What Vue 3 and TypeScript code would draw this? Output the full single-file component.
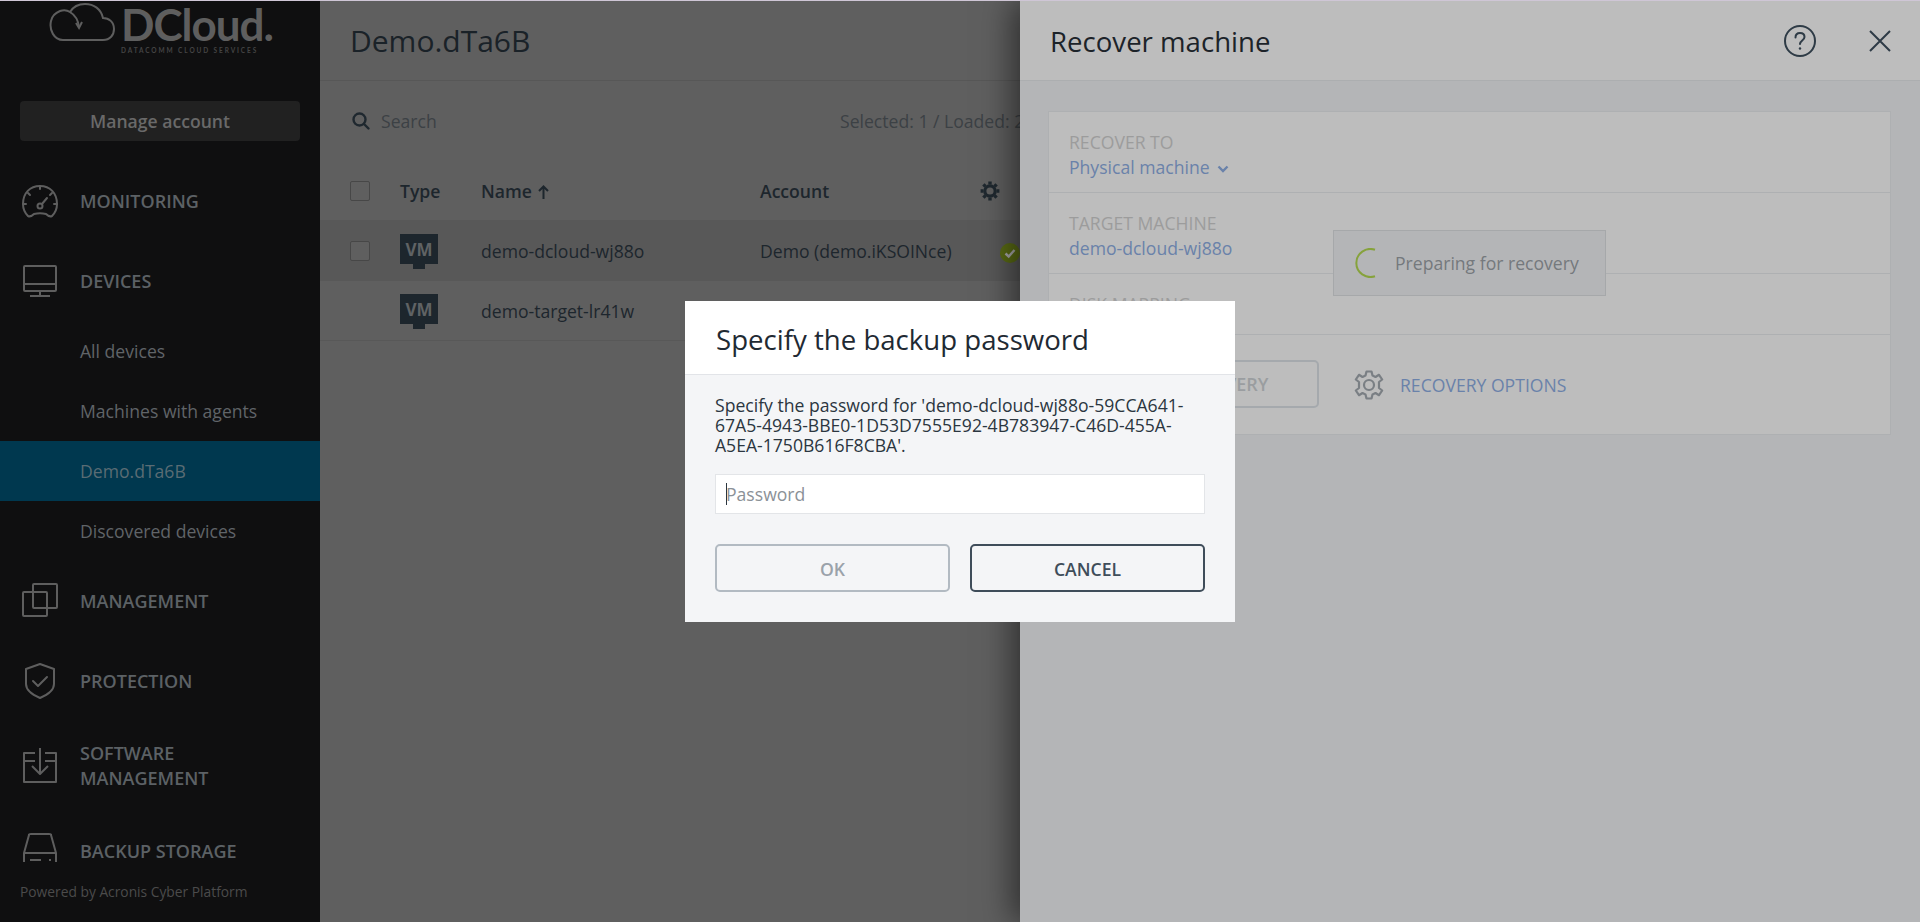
<template>
  <div class="app">
    <aside class="sidebar">
      <div class="logo">
        <svg class="logo-cloud" width="66" height="40" viewBox="0 0 66 40" fill="none" stroke="#5e5e5e" stroke-width="2">
          <path d="M14 38 H54 C61 38 65 33 65 27 C65 20 60 16 54 16 C52 7 45 2 36 2 C29 2 24 5 21 10 C18 8 14 8 11 9 C6 11 3 14 2 19 C0 28 5 38 14 38 Z" />
          <path d="M21 10 C26 13 29 17 30 25" />
          <path d="M27 21 L30 26 L33 20" />
        </svg>
        <div class="logo-text">
          <span class="logo-name">DCloud.</span>
          <span class="logo-tag">DATACOMM CLOUD SERVICES</span>
        </div>
      </div>
      <button class="manage">Manage account</button>

      <nav class="nav">
        <div class="nav-item">
          <svg class="nav-icon" width="40" height="40" viewBox="0 0 40 40" fill="none" stroke="#5e5e5e" stroke-width="2" stroke-linecap="round" stroke-linejoin="round">
            <path d="M8 35 C4 31 3 27 3 23 C3 12 10 5 20 5 C30 5 37 12 37 23 C37 27 36 31 32 35 C30 36 28 35 26 33 C22 32 18 32 14 33 C12 35 10 36 8 35 Z" />
            <circle cx="20" cy="25" r="2.5" />
            <path d="M22 23 L27 17 M20 5 V8 M8 12 L10 14 M32 12 L30 14 M3 23 H6 M37 23 H34" />
          </svg>
          <span>MONITORING</span>
        </div>
        <div class="nav-item">
          <svg class="nav-icon" width="40" height="40" viewBox="0 0 40 40" fill="none" stroke="#5e5e5e" stroke-width="2" stroke-linejoin="round">
            <rect x="4" y="5" width="32" height="25" rx="1" />
            <path d="M4 23 H36 M20 30 V35 M10 35 H30" />
          </svg>
          <span>DEVICES</span>
        </div>
        <div v-for="sub in subItems" :key="sub" class="sub-item" :class="{ active: sub === 'Demo.dTa6B' }">{{ sub }}</div>
        <div class="nav-item">
          <svg class="nav-icon" width="40" height="40" viewBox="0 0 40 40" fill="none" stroke="#5e5e5e" stroke-width="2" stroke-linejoin="round">
            <rect x="3" y="11" width="24" height="24" rx="1" />
            <rect x="13" y="3" width="24" height="24" rx="1" />
          </svg>
          <span>MANAGEMENT</span>
        </div>
        <div class="nav-item">
          <svg class="nav-icon" width="40" height="40" viewBox="0 0 40 40" fill="none" stroke="#5e5e5e" stroke-width="2" stroke-linejoin="round" stroke-linecap="round">
            <path d="M20 3 L34 8 V23 C34 29 27 34 20 37 C13 34 6 29 6 23 V8 Z" />
            <path d="M13 20 L18 25 L27 16" />
          </svg>
          <span>PROTECTION</span>
        </div>
        <div class="nav-item tall">
          <svg class="nav-icon" width="40" height="40" viewBox="0 0 40 40" fill="none" stroke="#5e5e5e" stroke-width="2" stroke-linejoin="round">
            <path d="M15 7 H4 V36 H36 V7 H25 M4 15 H15 M25 15 H36 M20 2 V27 M12 20 L20 28 L28 20" />
          </svg>
          <span>SOFTWARE<br />MANAGEMENT</span>
        </div>
        <div class="nav-item">
          <svg class="nav-icon" width="40" height="40" viewBox="0 0 40 40" fill="none" stroke="#5e5e5e" stroke-width="2" stroke-linejoin="round">
            <path d="M4 22 L9 4 C9 3 10 3 11 3 H29 C30 3 31 3 31 4 L36 22 V38 H4 Z M4 22 H36 M10 29 H21 M29 29 H31" />
          </svg>
          <span>BACKUP STORAGE</span>
        </div>
      </nav>
      <div class="powered">Powered by Acronis Cyber Platform</div>
    </aside>

    <main class="main">
      <header class="main-head">Demo.dTa6B</header>
      <div class="toolbar">
        <svg class="search-icon" width="20" height="20" viewBox="0 0 20 20" fill="none" stroke="#1f282f" stroke-width="2.4" stroke-linecap="round">
          <circle cx="8.5" cy="8.5" r="6" />
          <path d="M13 13 L17.5 17.5" />
        </svg>
        <span class="search">Search</span>
        <span class="count">Selected: 1 / Loaded: 2</span>
      </div>
      <div class="table">
        <div class="tr th">
          <span class="check"></span>
          <span class="col-type">Type</span>
          <span class="col-name">Name
            <svg class="arrow" width="11" height="14" viewBox="0 0 11 14" fill="none" stroke="#1d262d" stroke-width="2">
              <path d="M5.5 14 V2 M1 6 L5.5 1.5 L10 6" />
            </svg>
          </span>
          <span class="col-account">Account</span>
          <svg class="col-gear" width="20" height="20" viewBox="0 0 20 20" fill="none" stroke="#1f282f">
            <circle cx="10" cy="10" r="5.2" stroke-width="3.2" />
            <path stroke-width="3.4" d="M10 0.6 V3.5 M10 16.5 V19.4 M0.6 10 H3.5 M16.5 10 H19.4 M3.4 3.4 L5.4 5.4 M14.6 14.6 L16.6 16.6 M3.4 16.6 L5.4 14.6 M14.6 5.4 L16.6 3.4" />
          </svg>
        </div>
        <div v-for="row in rows" :key="row.name" class="tr" :class="{ selected: row.selected }">
          <span class="check" :class="{ hidden: !row.selected }"></span>
          <span class="col-type">
            <svg class="vm" width="38" height="35" viewBox="0 0 38 35">
              <path fill="#1d262d" d="M0 0 H38 V30 H25 V35 H13 V30 H0 Z" />
              <text x="19" y="22" text-anchor="middle" class="vm-text">VM</text>
            </svg>
          </span>
          <span class="col-name">{{ row.name }}</span>
          <span class="col-account">{{ row.account }}</span>
          <svg v-if="row.selected" class="col-status" width="20" height="20" viewBox="0 0 20 20">
            <circle cx="10" cy="10" r="10" fill="#5a6b14" />
            <path d="M5.5 10.5 L8.7 13.5 L14.5 7" fill="none" stroke="#a8a8a8" stroke-width="2.4" />
          </svg>
        </div>
      </div>
    </main>

    <section class="panel">
      <header class="panel-head">
        <span>Recover machine</span>
        <div class="panel-tools">
          <svg width="32" height="32" viewBox="0 0 32 32" fill="none" stroke="#2e3b46" stroke-width="2">
            <circle cx="16" cy="16" r="15" />
            <path stroke-linecap="round" d="M11.5 12.5 C11.5 9.5 13.5 8 16 8 C18.7 8 20.5 9.7 20.5 12 C20.5 15.5 16 15.5 16 19" />
            <circle cx="16" cy="23.5" r="1.2" fill="#2e3b46" stroke="none" />
          </svg>
          <svg width="22" height="22" viewBox="0 0 22 22" fill="none" stroke="#2e3b46" stroke-width="2">
            <path d="M1 1 L21 21 M21 1 L1 21" />
          </svg>
        </div>
      </header>
      <div class="panel-body">
        <div class="card">
          <div class="section sec-to">
            <div class="label">RECOVER TO</div>
            <div class="link">Physical machine
              <svg width="12" height="8" viewBox="0 0 12 8" fill="none" stroke="#6a82aa" stroke-width="2.4"><path d="M1.5 1.5 L6 6 L10.5 1.5" /></svg>
            </div>
          </div>
          <div class="section sec-target">
            <div class="label">TARGET MACHINE</div>
            <div class="link">demo-dcloud-wj88o</div>
          </div>
          <div class="section sec-disk">
            <div class="label">DISK MAPPING</div>
          </div>
          <div class="section sec-actions">
            <button class="start">START RECOVERY</button>
            <svg width="30" height="30" viewBox="0 0 30 30" fill="none" stroke="#7a7f84" stroke-width="2.2" stroke-linejoin="round">
              <circle cx="15" cy="15" r="5" />
              <path d="M12.5 1.5 H17.5 L18.5 5.5 L21.5 7 L25 4.8 L28.2 9.5 L25 12 V15 V18 L28.2 20.5 L25 25.2 L21.5 23 L18.5 24.5 L17.5 28.5 H12.5 L11.5 24.5 L8.5 23 L5 25.2 L1.8 20.5 L5 18 V12 L1.8 9.5 L5 4.8 L8.5 7 L11.5 5.5 Z" />
            </svg>
            <span class="options">RECOVERY OPTIONS</span>
          </div>
        </div>
        <div class="loading">
          <svg width="30" height="30" viewBox="0 0 30 30" fill="none" stroke="#86a23c" stroke-width="2">
            <path d="M20 1.8 A14 14 0 1 0 20 28.2" />
          </svg>
          <span>Preparing for recovery</span>
        </div>
      </div>
    </section>

    <div class="modal">
      <div class="modal-head">Specify the backup password</div>
      <div class="modal-body">
        <p>Specify the password for 'demo-dcloud-wj88o-59CCA641-67A5-4943-BBE0-1D53D7555E92-4B783947-C46D-455A-A5EA-1750B616F8CBA'.</p>
        <div class="field">
          <input type="password" placeholder="Password" />
          <i class="caret"></i>
        </div>
        <div class="buttons">
          <button class="ok" disabled>OK</button>
          <button class="cancel">CANCEL</button>
        </div>
      </div>
    </div>
  </div>
</template>

<script setup lang="ts">
interface Row {
  name: string;
  account: string;
  selected: boolean;
}

const subItems: string[] = ['All devices', 'Machines with agents', 'Demo.dTa6B', 'Discovered devices'];

const rows: Row[] = [
  { name: 'demo-dcloud-wj88o', account: 'Demo (demo.iKSOINce)', selected: true },
  { name: 'demo-target-lr41w', account: '', selected: false },
];
</script>

<style>
html, body {
  margin: 0;
  overflow: hidden;
}
</style>

<style scoped>
.app {
  position: relative;
  display: grid;
  grid-template-columns: 320px 700px 900px;
  height: 922px;
  box-sizing: border-box;
  border-top: 1px solid #cfc6d6;
  overflow: hidden;
  font-family: "Open Sans", sans-serif;
  font-size: 17.6px;
  color: #1d262d;
  background: #5f5f5f;
}

/* sidebar */
.sidebar {
  display: flex;
  flex-direction: column;
  background: #0f0f10;
  color: #5c6165;
  min-height: 0;
}

.logo {
  display: flex;
  height: 100px;
  padding-left: 49px;
  gap: 6px;
  box-sizing: border-box;
}

.logo-cloud {
  margin-top: 1px;
}

.logo-text {
  display: flex;
  flex-direction: column;
  color: #5e5e5e;
}

.logo-name {
  font-family: Lato, sans-serif;
  font-size: 44px;
  font-weight: 700;
  line-height: 43px;
  letter-spacing: -1px;
  margin-top: 2px;
}

.logo-tag {
  font-family: Lato, sans-serif;
  font-size: 6.5px;
  font-weight: 700;
  letter-spacing: 1.9px;
  line-height: 8px;
  margin-top: 1px;
  color: #444;
}

.manage {
  display: block;
  margin: 0 20px;
  height: 40px;
  border: 0;
  border-radius: 4px;
  background: #212121;
  color: #696969;
  font: 600 17.6px "Open Sans", sans-serif;
}

.nav {
  margin-top: 20px;
  height: 701px;
  overflow: hidden;
}

.nav-item {
  display: flex;
  align-items: center;
  height: 80px;
  padding-left: 20px;
  gap: 20px;
  font-size: 18px;
  font-weight: 600;
  line-height: 25px;
}

.nav-item.tall {
  height: 90px;
}

.nav-icon {
  flex: none;
}

.sub-item {
  height: 60px;
  line-height: 60px;
  padding-left: 80px;
  color: #606468;
}

.sub-item.active {
  background: #00384f;
  color: #5a6c74;
}

.powered {
  margin-top: 20px;
  padding-left: 20px;
  font-size: 13.8px;
  line-height: 19px;
  color: #4b4b4b;
}

/* list */
.main {
  background: #5f5f5f;
  min-width: 0;
  overflow: hidden;
}

.main-head {
  height: 79px;
  line-height: 80px;
  padding-left: 30px;
  font-size: 30px;
  border-bottom: 1px solid #575757;
  color: #1a2228;
}

.toolbar {
  display: flex;
  align-items: center;
  height: 40px;
  margin-top: 20px;
  padding-left: 31px;
  gap: 10px;
  color: #3c4145;
  white-space: nowrap;
}

.search-icon {
  flex: none;
}

.search {
  flex: none;
  width: 449px;
}

.table {
  margin-top: 20px;
}

.tr {
  display: flex;
  align-items: center;
  height: 60px;
  padding-left: 30px;
  border-bottom: 1px solid #585858;
  box-sizing: border-box;
  white-space: nowrap;
}

.tr.selected {
  background: #585858;
}

.th {
  font-weight: 600;
}

.check {
  flex: none;
  width: 18px;
  height: 18px;
  border: 1px solid #474747;
  border-radius: 2px;
  background: #5f5f5f;
}

.check.hidden {
  visibility: hidden;
}

.col-type {
  display: flex;
  width: 81px;
  margin-left: 30px;
}

.vm {
  margin-top: 1px;
}

.col-name {
  width: 279px;
}

.arrow {
  margin-left: 2px;
  vertical-align: -1px;
}

.col-account {
  width: 220px;
}

.col-gear {
  flex: none;
}

.col-status {
  flex: none;
  margin: 4px 0 0 20px;
}

.vm-text {
  font: 700 17px "Open Sans", sans-serif;
  fill: #5f6264;
}

/* side panel */
.panel {
  display: flex;
  flex-direction: column;
  background: #b4b5b7;
  box-shadow: -8px 0 30px rgba(0, 0, 0, 0.5);
  z-index: 1;
}

.panel-head {
  display: flex;
  align-items: center;
  justify-content: space-between;
  height: 79px;
  padding: 0 29px 0 30px;
  background: #bdbdbd;
  border-bottom: 1px solid #acaeb0;
  font-size: 27.6px;
  color: #1c2329;
  flex: none;
}

.panel-tools {
  display: flex;
  align-items: center;
  gap: 53px;
}

.panel-body {
  position: relative;
  flex: 1;
  padding: 30px 29px 0 28px;
}

.card {
  background: #bdbdbd;
  border: 1px solid #aeb0b2;
}

.section {
  box-sizing: border-box;
  padding-left: 20px;
  border-bottom: 1px solid #aeb0b2;
}

.section:last-child {
  border-bottom: 0;
}

.sec-to {
  height: 81px;
  padding-top: 18px;
}

.sec-target {
  height: 81px;
  padding-top: 18px;
}

.sec-disk {
  height: 61px;
  padding-top: 18px;
}

.sec-actions {
  display: flex;
  align-items: center;
  height: 99px;
}

.label {
  line-height: 24px;
  color: #9c9c9c;
}

.link {
  line-height: 26px;
  color: #6a82aa;
}

.link svg {
  margin-left: 3px;
  vertical-align: 1px;
}

.start {
  width: 250px;
  height: 48px;
  margin: -2px 35px 0 0;
  background: transparent;
  border: 2px solid #a5a9ad;
  border-radius: 5px;
  font: 600 18px "Open Sans", sans-serif;
  color: #9a9da0;
  flex: none;
}

.options {
  margin-left: 16px;
  color: #6a82aa;
}

.loading {
  position: absolute;
  left: 313px;
  top: 149px;
  display: flex;
  align-items: center;
  gap: 10px;
  width: 273px;
  height: 66px;
  box-sizing: border-box;
  padding-left: 21px;
  background: #b4b5b7;
  border: 1px solid #a6a8aa;
  color: #75797d;
  white-space: nowrap;
}

/* password dialog */
.modal {
  position: absolute;
  left: 685px;
  top: 300px;
  width: 550px;
  height: 321px;
  z-index: 2;
  background: #f4f5f7;
}

.modal-head {
  height: 73px;
  line-height: 76px;
  padding-left: 31px;
  background: #fff;
  border-bottom: 1px solid #e2e4e8;
  font-size: 27.6px;
  color: #1f2a33;
}

.modal-body {
  padding: 20px 30px 0;
}

.modal-body p {
  margin: 0;
  font-size: 17.6px;
  line-height: 20px;
  color: #2b3640;
}

.field {
  position: relative;
  margin-top: 19px;
}

.field input {
  display: block;
  width: 100%;
  height: 40px;
  box-sizing: border-box;
  padding: 0 10px;
  background: #fff;
  border: 1px solid #e3e5e8;
  outline: 0;
  font: 17.6px "Open Sans", sans-serif;
}

.field input::placeholder {
  color: #8b9197;
}

.caret {
  position: absolute;
  left: 11px;
  top: 9px;
  width: 1px;
  height: 22px;
  background: #2b3640;
}

.buttons {
  display: flex;
  gap: 20px;
  margin-top: 30px;
}

.buttons button {
  flex: 1;
  height: 48px;
  padding-top: 3px;
  background: transparent;
  border-radius: 5px;
  font: 600 17.6px "Open Sans", sans-serif;
}

.ok {
  border: 2px solid #b2bac2;
  color: #9aa2aa;
}

.cancel {
  border: 2px solid #3f4d5a;
  color: #3f4d5a;
}
</style>
